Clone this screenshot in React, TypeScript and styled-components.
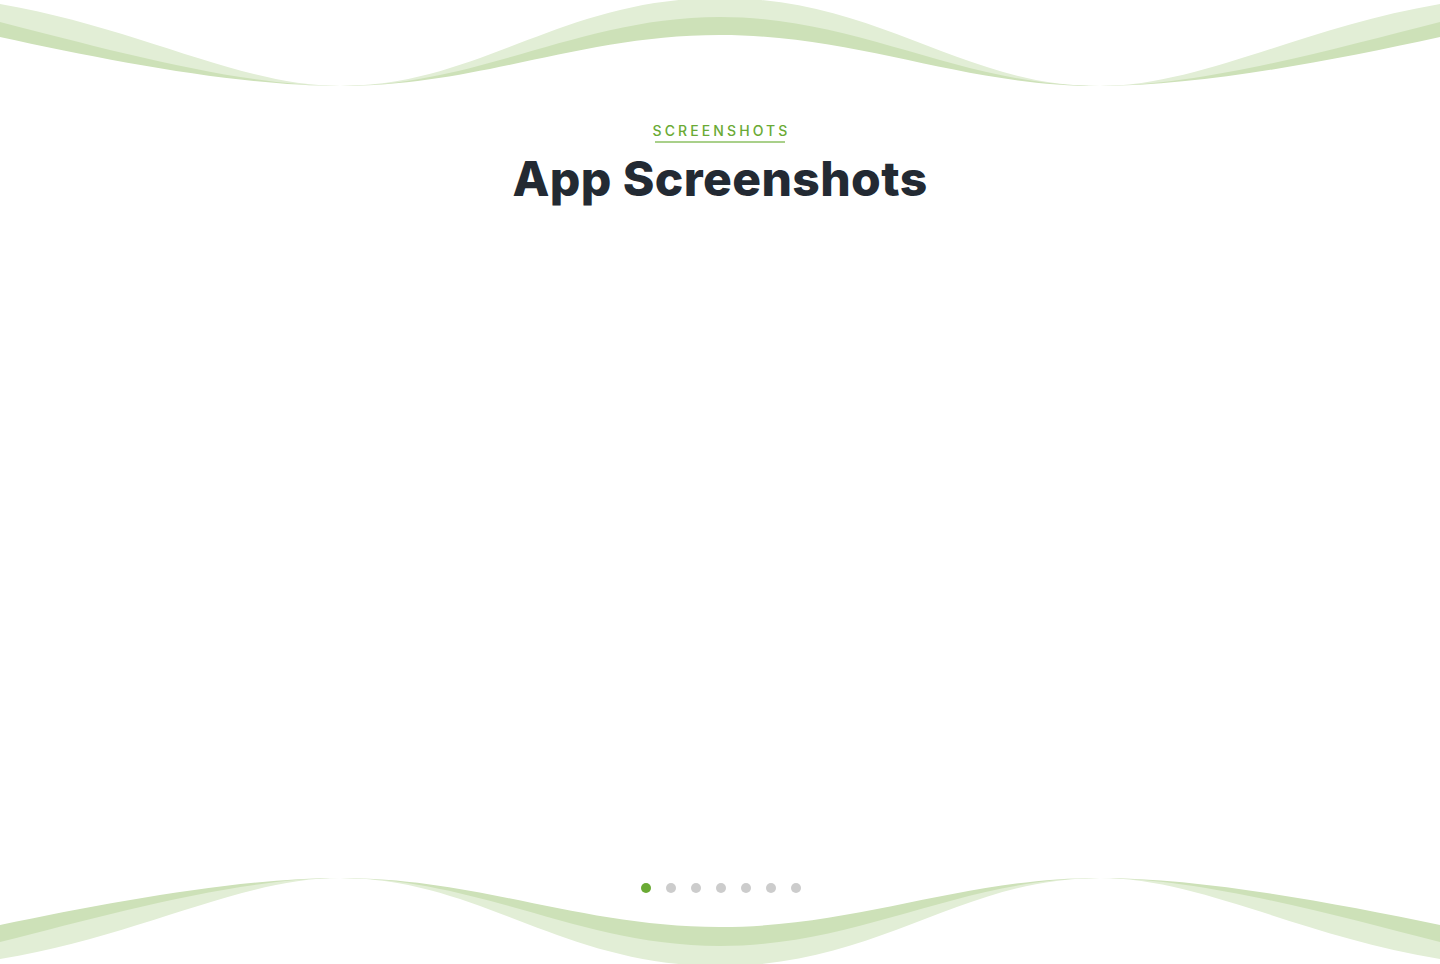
import React from "react";
import styled, { createGlobalStyle } from "styled-components";

const GlobalStyle = createGlobalStyle`
  html, body { margin: 0; padding: 0; background: #ffffff; }
  body { font-family: "Inter", "Liberation Sans", sans-serif; }
  * { box-sizing: border-box; }
`;

const LIGHT = "#e2eed6";
const DARK = "#cde1b8";

const Section = styled.section`
  position: relative;
  width: 1440px;
  height: 964px;
  overflow: hidden;
  background: #ffffff;
  display: flex;
  flex-direction: column;
  align-items: center;
  padding-top: 122px;
`;

const Wave = styled.svg<{ $bottom?: boolean }>`
  position: absolute;
  left: 0;
  width: 1440px;
  height: 100px;
  display: block;
  pointer-events: none;
  ${(p) => (p.$bottom ? "bottom: 0;" : "top: 0;")}
`;

const Header = styled.header`
  display: flex;
  flex-direction: column;
  align-items: center;
  position: relative;
  z-index: 1;
`;

const Eyebrow = styled.span`
  position: relative;
  display: inline-block;
  font-family: "Inter", "Liberation Sans", sans-serif;
  font-size: 14px;
  font-weight: 500;
  letter-spacing: 3.1px;
  line-height: 18px;
  color: #6aaa34;
  padding-left: 3px;
  padding-bottom: 3px;
  &::after {
    content: "";
    position: absolute;
    left: 50%;
    bottom: 0;
    transform: translateX(-50%);
    width: 130px;
    height: 2px;
    background: #a9d08a;
  }
`;

const Title = styled.h2`
  margin: 7px 0 0;
  font-family: "Inter", "Liberation Sans", sans-serif;
  font-size: 48px;
  font-weight: 800;
  line-height: 58px;
  letter-spacing: 0.4px;
  color: #232a33;
`;

const Carousel = styled.div`
  flex: 1;
  width: 100%;
`;

const Dots = styled.div`
  position: relative;
  z-index: 1;
  display: flex;
  gap: 15px;
  margin-bottom: 71px;
  padding-left: 2px;
`;

const Dot = styled.span<{ $active?: boolean }>`
  width: 10px;
  height: 10px;
  border-radius: 50%;
  background: ${(p) => (p.$active ? "#6aaa34" : "#cccccc")};
`;

const topA = "M0,4 C140,28 240,86 340,86 C480,86 560,-2 720,-2 C880,-2 960,86 1100,86 C1200,86 1300,28 1440,4";
const topB = "M0,22 C110,50 240,86 340,86 C480,86 580,17 720,17 C860,17 960,86 1100,86 C1200,86 1330,50 1440,22";
const topC = "M0,37 C110,61 240,86 340,86 C480,86 580,35 720,35 C860,35 960,86 1100,86 C1200,86 1330,61 1440,37";

const botA = "M0,95 C140,72 240,14 340,14 C480,14 560,102 720,102 C880,102 960,14 1100,14 C1200,14 1300,72 1440,95";
const botB = "M0,78 C110,50 240,14 340,14 C480,14 580,82 720,82 C860,82 960,14 1100,14 C1200,14 1330,50 1440,78";
const botC = "M0,61 C110,38 240,14 340,14 C480,14 580,63 720,63 C860,63 960,14 1100,14 C1200,14 1330,38 1440,61";

const TopWave = () => (
  <Wave viewBox="0 0 1440 100" preserveAspectRatio="none">
    <path d={`${topA} L1440,100 L0,100 Z`} fill={LIGHT} />
    <path d={`${topB} L1440,100 L0,100 Z`} fill={DARK} />
    <path d={`${topC} L1440,100 L0,100 Z`} fill="#ffffff" />
  </Wave>
);

const BottomWave = () => (
  <Wave $bottom viewBox="0 0 1440 100" preserveAspectRatio="none">
    <path d={`${botA} L1440,0 L0,0 Z`} fill={LIGHT} />
    <path d={`${botB} L1440,0 L0,0 Z`} fill={DARK} />
    <path d={`${botC} L1440,0 L0,0 Z`} fill="#ffffff" />
  </Wave>
);

export default function App() {
  const slides = [0, 1, 2, 3, 4, 5, 6];
  return (
    <>
      <GlobalStyle />
      <Section>
        <TopWave />
        <BottomWave />
        <Header>
          <Eyebrow>SCREENSHOTS</Eyebrow>
          <Title>App Screenshots</Title>
        </Header>
        <Carousel />
        <Dots>
          {slides.map((i) => (
            <Dot key={i} $active={i === 0} />
          ))}
        </Dots>
      </Section>
    </>
  );
}
